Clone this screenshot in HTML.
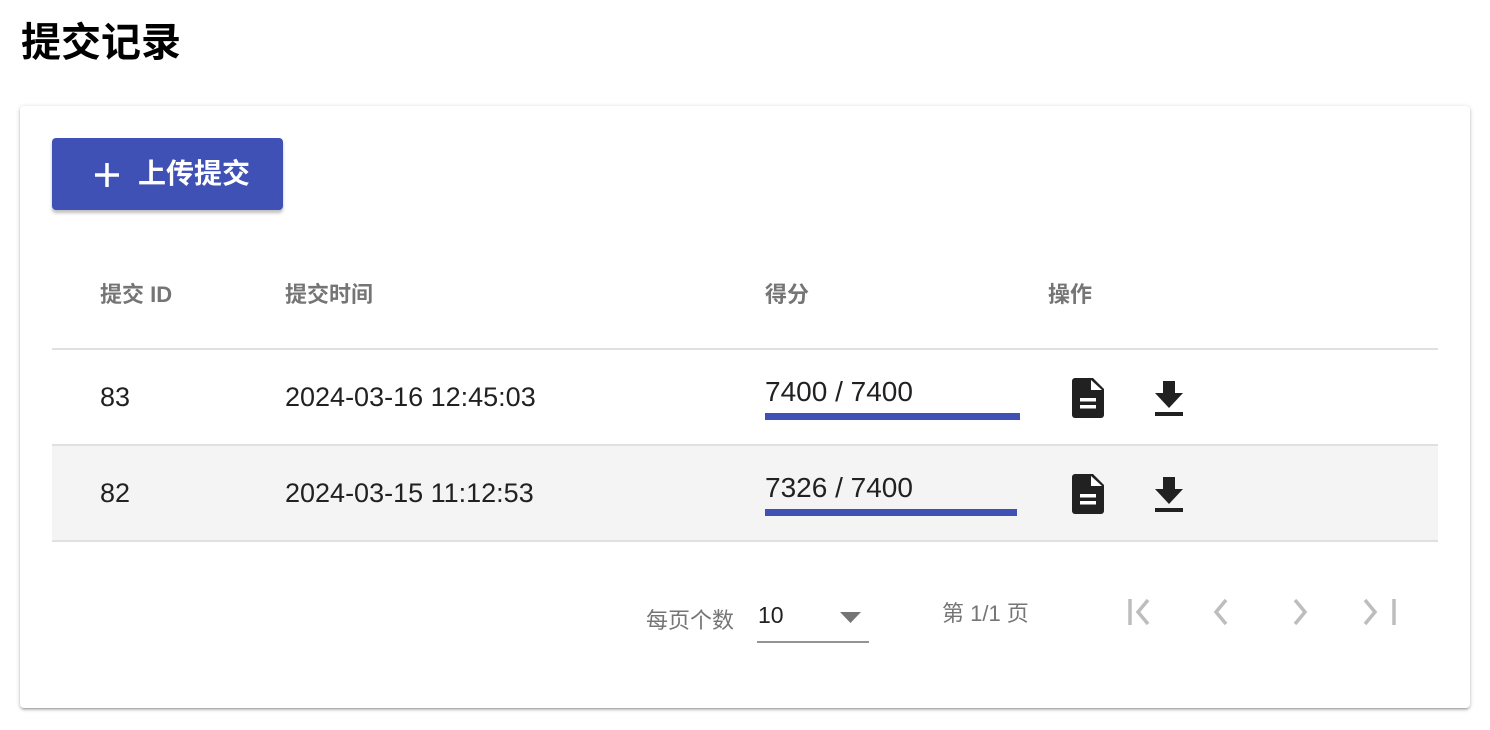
<!DOCTYPE html>
<html><head><meta charset="utf-8"><style>
body{margin:0;background:#fff;width:1490px;height:730px;overflow:hidden;font-family:"Liberation Sans","Noto Sans CJK SC",sans-serif;color:#212121}
h1{position:absolute;left:21px;top:18px;margin:0;font-size:40px;font-weight:bold;line-height:50px;color:#000}
.card{position:absolute;left:20px;top:106px;width:1450px;height:602px;background:#fff;border-radius:4px;box-shadow:0 2px 2px rgba(0,0,0,.14),0 3px 1px -2px rgba(0,0,0,.12),0 1px 5px rgba(0,0,0,.2)}
.btn{position:absolute;left:32px;top:32px;width:231px;height:72px;background:#3f51b5;border-radius:4px;color:#fff;font-size:28px;font-weight:bold;box-shadow:0 3px 3px rgba(0,0,0,.25)}
.btn span{position:absolute;left:86px;top:19px;line-height:34px}
.hd{position:absolute;top:171px;font-size:22px;color:#757575;font-weight:bold}
.line{position:absolute;left:32px;width:1386px;height:2px;background:#e0e0e0}
.cell{position:absolute;font-size:27px;color:#212121}
.bar{position:absolute;left:745px;width:255px;height:7px;background:#3f51b5}
.pg{position:absolute;font-size:22px;color:#757575}
</style></head><body>
<h1>提交记录</h1>
<div class="card">
 <div class="btn"><svg style="position:absolute;left:40px;top:22px" width="30" height="30" viewBox="0 0 30 30"><path d="M15 3v24M3 15h24" stroke="#fff" stroke-width="3.5"/></svg><span>上传提交</span></div>
 <div class="hd" style="left:80px">提交 ID</div>
 <div class="hd" style="left:265px">提交时间</div>
 <div class="hd" style="left:745px">得分</div>
 <div class="hd" style="left:1028px">操作</div>
 <div class="line" style="top:242px"></div>
 <div class="cell" style="left:80px;top:276px">83</div>
 <div class="cell" style="left:265px;top:276px">2024-03-16 12:45:03</div>
 <div class="cell" style="left:745px;top:270px;font-size:28px">7400 / 7400</div>
 <div class="bar" style="top:307px"></div>
 <div class="line" style="top:338px"></div>
 <div style="position:absolute;left:32px;top:340px;width:1386px;height:94px;background:#f4f4f4"></div>
 <div class="cell" style="left:80px;top:372px">82</div>
 <div class="cell" style="left:265px;top:372px">2024-03-15 11:12:53</div>
 <div class="cell" style="left:745px;top:366px;font-size:28px">7326 / 7400</div>
 <div class="bar" style="top:403px;width:252px"></div>
 <div class="line" style="top:434px"></div>
 <svg style="position:absolute;left:1052px;top:272px" width="32" height="40" viewBox="0 0 32 40"><path d="M3 0h18l11 11v26a3 3 0 0 1-3 3H3a3 3 0 0 1-3-3V3a3 3 0 0 1 3-3z" fill="#212121"/><path d="M19 2v10h11z" fill="#fff"/><rect x="8" y="20" width="16" height="3.5" fill="#fff"/><rect x="8" y="27" width="16" height="3.5" fill="#fff"/></svg>
 <svg style="position:absolute;left:1134px;top:275px" width="30" height="36" viewBox="0 0 30 36"><path d="M9 0h12v12h8L15 27 1 12h8z M1 31h28v4H1z" fill="#212121"/></svg>
 <svg style="position:absolute;left:1052px;top:368px" width="32" height="40" viewBox="0 0 32 40"><path d="M3 0h18l11 11v26a3 3 0 0 1-3 3H3a3 3 0 0 1-3-3V3a3 3 0 0 1 3-3z" fill="#212121"/><path d="M19 2v10h11z" fill="#fff"/><rect x="8" y="20" width="16" height="3.5" fill="#fff"/><rect x="8" y="27" width="16" height="3.5" fill="#fff"/></svg>
 <svg style="position:absolute;left:1134px;top:371px" width="30" height="36" viewBox="0 0 30 36"><path d="M9 0h12v12h8L15 27 1 12h8z M1 31h28v4H1z" fill="#212121"/></svg>
 <div class="pg" style="left:626px;top:497px">每页个数</div>
 <div class="cell" style="left:738px;top:496px;font-size:23px">10</div>
 <svg style="position:absolute;left:820px;top:506px" width="22" height="12"><path d="M0 0h21L10.5 11z" fill="#757575"/></svg>
 <div style="position:absolute;left:737px;top:535px;width:112px;height:2px;background:#949494"></div>
 <div class="pg" style="left:922px;top:490px">第 1/1 页</div>
 <svg style="position:absolute;left:1100px;top:488px" width="300" height="36" viewBox="0 0 300 36" fill="none" stroke="#bdbdbd" stroke-width="3.5"><path d="M10 5v26M28 6L18 18l10 12"/><path d="M106 6L96 18l10 12"/><path d="M175 6l10 12-10 12"/><path d="M245 6l10 12-10 12M274 5v26"/></svg>
</div>
</body></html>
